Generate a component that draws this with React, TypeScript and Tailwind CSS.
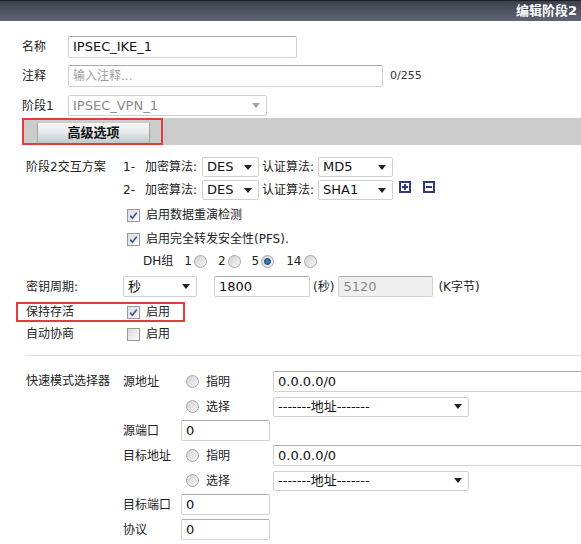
import React from 'react';

const font = { fontFamily: '"DejaVu Sans", "Noto Sans CJK SC", sans-serif' };

function Check({ checked }: { checked?: boolean }) {
  return (
    <span className="relative inline-block w-[13px] h-[13px] shrink-0 border border-[#9a9a9a] bg-gradient-to-br from-[#dcdcdc] to-[#fbfbfb]">
      {checked && (
        <svg viewBox="0 0 11 11" className="absolute inset-0 w-[11px] h-[11px]">
          <path d="M2.2 5.6 L4.4 8.2 L8.8 2.4" fill="none" stroke="#3b5a9c" strokeWidth="1.7" />
        </svg>
      )}
    </span>
  );
}

function Radio({ checked }: { checked?: boolean }) {
  return (
    <span className="inline-flex items-center justify-center w-[13px] h-[13px] shrink-0 rounded-full border border-[#a8a8a8] bg-gradient-to-br from-[#d2d2d2] to-[#f6f6f6]">
      {checked && (
        <span className="w-[7px] h-[7px] rounded-full bg-[#2f74b5] border border-[#1d3f66]" />
      )}
    </span>
  );
}

function Arrow({ gray }: { gray?: boolean }) {
  return (
    <svg viewBox="0 0 8 5" className="w-[8px] h-[5px] shrink-0">
      <path d="M0 0 H8 L4 5 Z" fill={gray ? '#a0a0a0' : '#222'} />
    </svg>
  );
}

function Select({ w, value, gray }: { w: string; value: string; gray?: boolean }) {
  return (
    <div className={`${w} h-[20px] shrink-0 flex items-center justify-between pl-[4px] pr-[6px] bg-white border border-[#d0d0d0] rounded-[2px] text-[13px] ${gray ? 'text-[#8a8a8a]' : 'text-[#111]'}`}>
      <span className="truncate">{value}</span>
      <Arrow gray={gray} />
    </div>
  );
}

function Input({ w, value, h = 'h-[21px]', disabled, placeholder }: { w: string; value?: string; h?: string; disabled?: boolean; placeholder?: string }) {
  return (
    <div className={`${w} ${h} shrink-0 flex items-center px-[4px] border border-[#d2d2d2] border-t-[#ababab] rounded-[2px] text-[13px] ${disabled ? 'bg-[#efefef] text-[#8a8a8a]' : 'bg-white text-[#111]'}`}>
      {value ? value : <span className="text-[#a0a0a0] text-[12px]">{placeholder}</span>}
    </div>
  );
}

function Box({ plus }: { plus?: boolean }) {
  return (
    <svg viewBox="0 0 12 12" className="w-[12px] h-[12px] shrink-0">
      <rect x="0" y="0" width="12" height="12" fill="#2f3b7d" />
      <rect x="2" y="2" width="8" height="8" fill="#ffffff" />
      <rect x="3" y="5" width="6" height="2" fill="#2f3b7d" />
      {plus && <rect x="5" y="3" width="2" height="6" fill="#2f3b7d" />}
    </svg>
  );
}

function SchemeRow({ n, auth, icons }: { n: string; auth: string; icons?: boolean }) {
  return (
    <div className="flex items-center h-[20px]">
      <span className="w-[22px] shrink-0">{n}</span>
      <span>加密算法:</span>
      <div className="ml-[5px]"><Select w="w-[57px]" value="DES" /></div>
      <span className="ml-[3px]">认证算法:</span>
      <div className="ml-[4px]"><Select w="w-[75px]" value={auth} /></div>
      {icons && (
        <>
          <span className="ml-[6px] -mt-[6px] flex"><Box plus /></span>
          <span className="ml-[12px] -mt-[6px] flex"><Box /></span>
        </>
      )}
    </div>
  );
}

export default function App() {
  return (
    <div className="w-[581px] h-[544px] overflow-hidden bg-white text-[12px] text-[#222]" style={font}>
      <header className="h-[21px] border-t border-[#1c1f26] bg-gradient-to-b from-[#3b404b] to-[#5e6574] flex items-center justify-end pr-[4px]">
        <span className="text-white font-bold text-[13px]">编辑阶段2</span>
      </header>

      <div className="pl-[22px] mt-[15px]">
        <div className="flex items-center h-[22px]">
          <span className="w-[46px] shrink-0">名称</span>
          <Input w="w-[229px]" h="h-[22px]" value="IPSEC_IKE_1" />
        </div>
        <div className="flex items-center h-[22px] mt-[7px]">
          <span className="w-[46px] shrink-0">注释</span>
          <Input w="w-[315px]" h="h-[22px]" placeholder="输入注释..." />
          <span className="ml-[7px] text-[11px] text-[#333]">0/255</span>
        </div>
        <div className="flex items-center h-[21px] mt-[8px]">
          <span className="w-[46px] shrink-0">阶段1</span>
          <Select w="w-[199px] h-[21px]" value="IPSEC_VPN_1" gray />
        </div>
        <div className="mt-[2px] h-[27px] bg-[#cccccc]">
          <div className="w-[141px] h-[27px] border-2 border-[#e23c3c] pl-[13px] pt-[3px]">
            <button className="w-[113px] h-[20px] flex items-center justify-center border-x border-[#a5a5a5] bg-gradient-to-b from-[#f7f7f7] via-[#e6e8ea] to-[#c3c8cc] font-bold text-[13px] text-[#111]">
              高级选项
            </button>
          </div>
        </div>
      </div>

      <div className="pl-[26px] mt-[12px]">
        <div className="flex">
          <span className="w-[97px] shrink-0 pt-[1px]">阶段2交互方案</span>
          <div className="flex flex-col gap-[3px]">
            <SchemeRow n="1-" auth="MD5" />
            <SchemeRow n="2-" auth="SHA1" icons />
            <div className="flex items-center h-[20px] mt-[2px] pl-[4px]">
              <Check checked />
              <span className="ml-[6px]">启用数据重演检测</span>
            </div>
            <div className="flex items-center h-[20px] mt-[1px] pl-[4px]">
              <Check checked />
              <span className="ml-[6px]">启用完全转发安全性(PFS).</span>
            </div>
            <div className="flex items-center h-[20px] -mt-[1px] pl-[20px]">
              <span className="mr-[11px]">DH组</span>
              <span>1</span>
              <span className="ml-[2px] mr-[11px] flex"><Radio /></span>
              <span>2</span>
              <span className="ml-[2px] mr-[11px] flex"><Radio /></span>
              <span>5</span>
              <span className="ml-[2px] mr-[12px] flex"><Radio checked /></span>
              <span>14</span>
              <span className="ml-[3px] flex"><Radio /></span>
            </div>
          </div>
        </div>

        <div className="flex items-center h-[21px] mt-[5px]">
          <span className="w-[97px] shrink-0">密钥周期:</span>
          <Select w="w-[74px] h-[21px]" value="秒" />
          <div className="ml-[17px]"><Input w="w-[96px]" value="1800" /></div>
          <span className="ml-[3px]">(秒)</span>
          <div className="ml-[4px]"><Input w="w-[95px]" value="5120" disabled /></div>
          <span className="ml-[5px]">(K字节)</span>
        </div>

        <div className="flex items-center h-[20px] mt-[5px] -ml-[10px] w-[169px] border-2 border-[#e23c3c] pl-[8px]">
          <span className="w-[97px] shrink-0">保持存活</span>
          <span className="ml-[4px] flex"><Check checked /></span>
          <span className="ml-[6px]">启用</span>
        </div>
        <div className="flex items-center h-[20px] mt-[2px]">
          <span className="w-[97px] shrink-0">自动协商</span>
          <span className="ml-[4px] flex"><Check /></span>
          <span className="ml-[6px]">启用</span>
        </div>

        <div className="mt-[11px] border-t border-[#dedede]" />

        <div className="flex mt-[15px]">
          <span className="w-[97px] shrink-0 pt-[1px]">快速模式选择器</span>
          <div className="flex flex-col shrink-0">
            <div className="flex items-center h-[21px]">
              <span className="w-[63px] shrink-0">源地址</span>
              <div className="w-[87px] shrink-0 flex items-center">
                <Radio />
                <span className="ml-[7px]">指明</span>
              </div>
              <Input w="w-[330px]" value="0.0.0.0/0" />
            </div>
            <div className="flex items-center h-[21px] mt-[4px]">
              <span className="w-[63px] shrink-0" />
              <div className="w-[87px] shrink-0 flex items-center">
                <Radio />
                <span className="ml-[7px]">选择</span>
              </div>
              <Select w="w-[196px]" value="-------地址-------" />
            </div>
            <div className="flex items-center h-[21px] mt-[3px]">
              <span className="w-[58px] shrink-0">源端口</span>
              <Input w="w-[89px]" value="0" />
            </div>
            <div className="flex items-center h-[21px] mt-[4px]">
              <span className="w-[63px] shrink-0">目标地址</span>
              <div className="w-[87px] shrink-0 flex items-center">
                <Radio />
                <span className="ml-[7px]">指明</span>
              </div>
              <Input w="w-[330px]" value="0.0.0.0/0" />
            </div>
            <div className="flex items-center h-[21px] mt-[4px]">
              <span className="w-[63px] shrink-0" />
              <div className="w-[87px] shrink-0 flex items-center">
                <Radio />
                <span className="ml-[7px]">选择</span>
              </div>
              <Select w="w-[196px]" value="-------地址-------" />
            </div>
            <div className="flex items-center h-[21px] mt-[3px]">
              <span className="w-[58px] shrink-0">目标端口</span>
              <Input w="w-[89px]" value="0" />
            </div>
            <div className="flex items-center h-[21px] mt-[4px]">
              <span className="w-[58px] shrink-0">协议</span>
              <Input w="w-[89px]" value="0" />
            </div>
          </div>
        </div>
      </div>
    </div>
  );
}
